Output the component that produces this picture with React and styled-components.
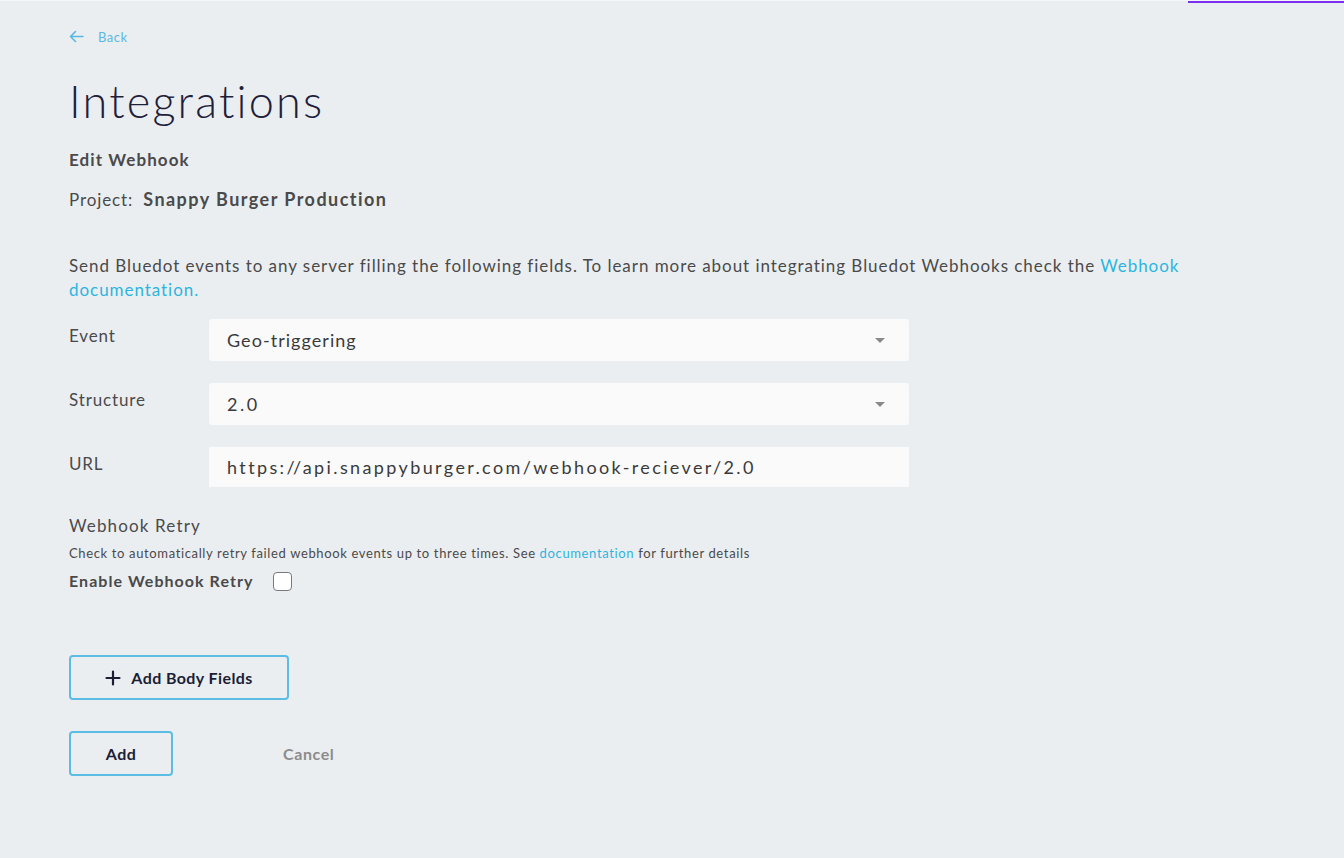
import React from "react";
import styled, { createGlobalStyle } from "styled-components";

const Global = createGlobalStyle`
  html, body { margin: 0; padding: 0; background: #ebeef1; }
  body { font-family: "Lato", "Noto Sans", sans-serif; color: #4a4a4a; }
  * { box-sizing: border-box; }
`;

const Page = styled.div`
  position: relative;
  min-height: 858px;
  padding: 26px 0 0 69px;
  border-top: 1px solid #f4f6f8;
`;

const TopBar = styled.div`
  position: absolute;
  top: 0;
  right: 0;
  width: 156px;
  height: 2px;
  background: #7b2ff0;
`;

const BackLink = styled.a`
  display: inline-flex;
  align-items: center;
  gap: 14px;
  color: #5bb8e3;
  font-size: 13px;
  letter-spacing: 0.5px;
  text-decoration: none;
  height: 18px;
`;

const Title = styled.h1`
  margin: 28px 0 0;
  font-size: 45px;
  font-weight: 300;
  color: #1e2039;
  letter-spacing: 2.2px;
  line-height: 54px;
`;

const SubTitle = styled.div`
  margin-top: 21px;
  font-size: 17px;
  font-weight: 700;
  color: #4a4a4a;
  letter-spacing: 1.1px;
`;

const ProjectLine = styled.div`
  margin-top: 18px;
  font-size: 17px;
  display: flex;
  gap: 10px;
  align-items: baseline;
  letter-spacing: 0.9px;
`;

const Strong = styled.span`
  font-weight: 700;
  font-size: 18px;
  letter-spacing: 1.45px;
`;

const Intro = styled.p`
  margin: 44px 0 0;
  font-size: 17px;
  line-height: 24px;
  max-width: 1140px;
  letter-spacing: 0.95px;
`;

const Link = styled.a`
  color: #2bb5e0;
  text-decoration: none;
`;

const Form = styled.div`
  margin-top: 17px;
  display: flex;
  flex-direction: column;
  gap: 22px;
  width: 840px;
`;

const Row = styled.div`
  display: grid;
  grid-template-columns: 140px 700px;
  align-items: start;
`;

const Label = styled.div`
  font-size: 17px;
  padding-top: 6px;
  letter-spacing: 0.85px;
`;

const Field = styled.div`
  height: ${(p) => (p.$tall ? 42 : 40)}px;
  background: #fafafa;
  border-radius: ${(p) => (p.$tall ? 3 : 0)}px;
  display: flex;
  align-items: center;
  justify-content: space-between;
  padding: 0 24px 0 18px;
  font-size: 18px;
  color: #3a3a3a;
`;

const FieldText = styled.span`
  letter-spacing: ${(p) => p.$ls}px;
`;

const Caret = styled.span`
  width: 0;
  height: 0;
  border-left: 5px solid transparent;
  border-right: 5px solid transparent;
  border-top: 5px solid #8a8a8a;
`;

const RetryTitle = styled.div`
  margin-top: 28px;
  font-size: 17px;
  letter-spacing: 1.15px;
`;

const RetryHelp = styled.div`
  margin-top: 9px;
  font-size: 13px;
  letter-spacing: 0.64px;
`;

const CheckRow = styled.label`
  margin-top: 8px;
  display: flex;
  align-items: center;
  gap: 20px;
  font-size: 16px;
  font-weight: 700;
  letter-spacing: 1.05px;
`;

const Box = styled.span`
  width: 19px;
  height: 19px;
  border: 1px solid #7a7a7a;
  border-radius: 4px;
  background: #fff;
  margin-top: 3px;
`;

const OutlineButton = styled.button`
  display: flex;
  align-items: center;
  justify-content: center;
  gap: 10px;
  width: ${(p) => p.$w}px;
  height: 45px;
  border: 2px solid #5bbde4;
  border-radius: 4px;
  background: transparent;
  font-family: inherit;
  font-size: 16px;
  font-weight: 700;
  color: #1c1e35;
  letter-spacing: 0.4px;
  padding: 0;
`;

const BodyFieldsWrap = styled.div`
  margin-top: 64px;
`;

const Actions = styled.div`
  margin-top: 31px;
  display: flex;
  align-items: center;
  gap: 110px;
`;

const CancelButton = styled.button`
  border: none;
  background: transparent;
  font-family: inherit;
  font-size: 16px;
  font-weight: 700;
  color: #8c8c8c;
  padding: 0;
  letter-spacing: 0.6px;
`;

export default function App() {
  return (
    <>
      <Global />
      <Page>
        <TopBar />
        <BackLink href="#">
          <svg width="15" height="13" viewBox="0 0 15 13" fill="none" stroke="#5bb8e3" strokeWidth="1.6" strokeLinecap="round" strokeLinejoin="round">
            <path d="M14 6.5H1.5M6.5 1.5L1.5 6.5L6.5 11.5" />
          </svg>
          Back
        </BackLink>
        <Title>Integrations</Title>
        <SubTitle>Edit Webhook</SubTitle>
        <ProjectLine>
          <span>Project:</span>
          <Strong>Snappy Burger Production</Strong>
        </ProjectLine>
        <Intro>
          Send Bluedot events to any server filling the following fields. To learn more about integrating Bluedot Webhooks check the{" "}
          <Link href="#">Webhook</Link> <Link href="#">documentation.</Link>
        </Intro>
        <Form>
          <Row>
            <Label>Event</Label>
            <Field $tall>
              <FieldText $ls={1.05}>Geo-triggering</FieldText>
              <Caret />
            </Field>
          </Row>
          <Row>
            <Label>Structure</Label>
            <Field $tall>
              <FieldText $ls={2.5}>2.0</FieldText>
              <Caret />
            </Field>
          </Row>
          <Row>
            <Label>URL</Label>
            <Field>
              <FieldText $ls={2.38}>https://api.snappyburger.com/webhook-reciever/2.0</FieldText>
            </Field>
          </Row>
        </Form>
        <RetryTitle>Webhook Retry</RetryTitle>
        <RetryHelp>
          Check to automatically retry failed webhook events up to three times. See{" "}
          <Link href="#">documentation</Link> for further details
        </RetryHelp>
        <CheckRow>
          Enable Webhook Retry
          <Box />
        </CheckRow>
        <BodyFieldsWrap>
          <OutlineButton $w={220}>
            <svg width="16" height="16" viewBox="0 0 16 16" stroke="#1c1e35" strokeWidth="2.2" strokeLinecap="round">
              <path d="M8 1.5V14.5M1.5 8H14.5" />
            </svg>
            Add Body Fields
          </OutlineButton>
        </BodyFieldsWrap>
        <Actions>
          <OutlineButton $w={104}>Add</OutlineButton>
          <CancelButton>Cancel</CancelButton>
        </Actions>
      </Page>
    </>
  );
}
